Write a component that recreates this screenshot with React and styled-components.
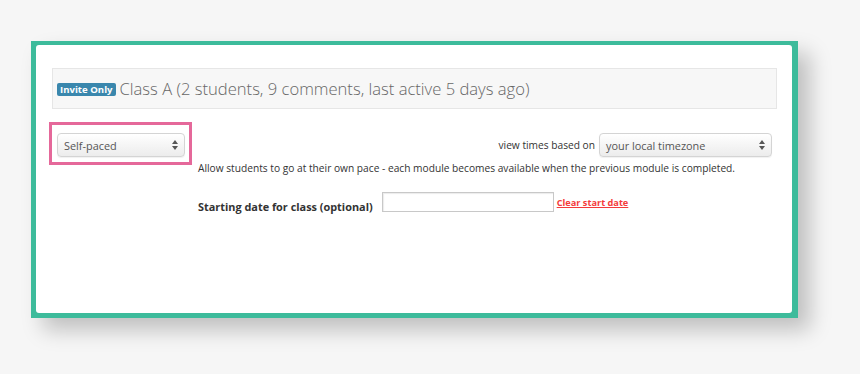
import React from "react";
import styled, { createGlobalStyle } from "styled-components";

const GlobalStyle = createGlobalStyle`
  html, body {
    margin: 0;
    padding: 0;
    background: #f6f6f6;
  }
  body {
    font-family: "Open Sans", "Liberation Sans", sans-serif;
    color: #333;
  }
`;

const Page = styled.div`
  width: 860px;
  height: 374px;
  padding: 41px 0 0 31px;
  box-sizing: border-box;
`;

const Frame = styled.div`
  width: 767px;
  height: 277px;
  box-sizing: border-box;
  border: 5px solid #3dbb9b;
  border-top-width: 4px;
  border-right-width: 6px;
  background: #3dbb9b;
  box-shadow: 12px 12px 20px rgba(0, 0, 0, 0.22);
`;

const Inner = styled.div`
  height: 100%;
  background: #fff;
  border-radius: 3px;
  padding: 23px 15px 0 16px;
  box-sizing: border-box;
`;

const Header = styled.div`
  display: flex;
  align-items: center;
  gap: 4px;
  height: 41px;
  box-sizing: border-box;
  padding: 0 4px;
  background: #f7f7f7;
  border: 1px solid #e6e6e6;
`;

const Badge = styled.span`
  display: inline-block;
  background: #3a87ad;
  color: #fff;
  font-size: 9.6px;
  font-weight: 700;
  line-height: 13px;
  padding: 0 3px;
  border-radius: 2px;
  margin-top: 1px;
`;

const Title = styled.h2`
  margin: 0;
  font-size: 16.6px;
  font-weight: 300;
  color: #666;
`;

const Body = styled.div`
  display: flex;
  margin-top: 13px;
`;

const Highlight = styled.div`
  margin-left: -3px;
  width: 143px;
  height: 43px;
  box-sizing: border-box;
  border: 3px solid #e5689a;
  padding: 8px 0 0 5px;
`;

const Select = styled.div`
  display: flex;
  align-items: center;
  justify-content: space-between;
  width: ${({ $w }) => $w}px;
  height: 24px;
  box-sizing: border-box;
  padding: 0 6px 0 6px;
  border: 1px solid #d4d4d4;
  border-radius: 4px;
  background: linear-gradient(#ffffff, #ececec);
  box-shadow: 0 1px 1px rgba(0, 0, 0, 0.06);
  font-size: 10.9px;
  color: #555;
`;

const Arrows = () => (
  <svg width="6" height="10" viewBox="0 0 6 10">
    <path d="M3 0 L6 4 L0 4 Z" fill="#555" />
    <path d="M3 10 L6 6 L0 6 Z" fill="#555" />
  </svg>
);

const Right = styled.div`
  flex: 1;
  margin-left: 6px;
  padding-top: 11px;
`;

const TzRow = styled.div`
  display: flex;
  justify-content: flex-end;
  align-items: center;
  gap: 4px;
  padding-right: 5px;
  font-size: 10.2px;
  color: #333;
`;

const Help = styled.p`
  margin: 3px 0 0;
  font-size: 10.2px;
  color: #333;
  line-height: 16px;
`;

const DateRow = styled.div`
  display: flex;
  align-items: center;
  margin-top: 14px;
`;

const Label = styled.label`
  font-size: 10.9px;
  font-weight: 700;
  color: #333;
  margin-right: 9px;
  margin-top: 9px;
`;

const Input = styled.input`
  width: 172px;
  height: 20px;
  box-sizing: border-box;
  border: 1px solid #c8c8c8;
  box-shadow: inset 1px 1px 1px rgba(0, 0, 0, 0.08);
  padding: 0 4px;
  margin: 0;
`;

const ClearLink = styled.a`
  margin-left: 3px;
  font-size: 9.2px;
  font-weight: 700;
  color: #f43b3b;
  text-decoration: underline;
`;

export default function App() {
  return (
    <>
      <GlobalStyle />
      <Page>
        <Frame>
          <Inner>
            <Header>
              <Badge>Invite Only</Badge>
              <Title>Class A (2 students, 9 comments, last active 5 days ago)</Title>
            </Header>
            <Body>
              <Highlight>
                <Select $w={128}>
                  Self-paced
                  <Arrows />
                </Select>
              </Highlight>
              <Right>
                <TzRow>
                  view times based on
                  <Select $w={173}>
                    your local timezone
                    <Arrows />
                  </Select>
                </TzRow>
                <Help>
                  Allow students to go at their own pace - each module becomes
                  available when the previous module is completed.
                </Help>
                <DateRow>
                  <Label>Starting date for class (optional)</Label>
                  <Input type="text" />
                  <ClearLink href="#">Clear start date</ClearLink>
                </DateRow>
              </Right>
            </Body>
          </Inner>
        </Frame>
      </Page>
    </>
  );
}
